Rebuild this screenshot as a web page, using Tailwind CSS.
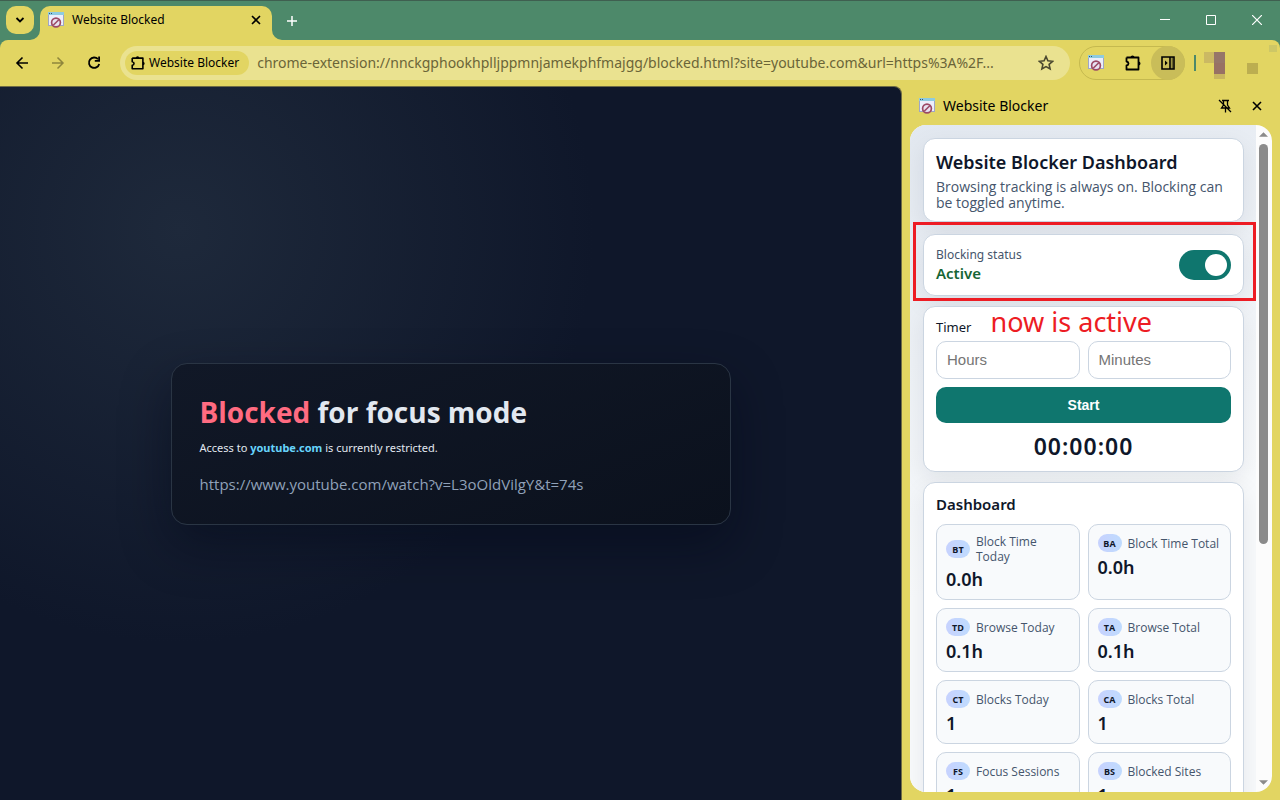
<!DOCTYPE html>
<html lang="en">
<head>
<meta charset="utf-8">
<meta name="viewport" content="width=device-width, initial-scale=1">
<title>Website Blocked</title>
<script src="https://cdn.jsdelivr.net/npm/@tailwindcss/browser@4"></script>
</head>
<body class="relative flex h-screen flex-col overflow-hidden bg-[#e2d562] font-['Noto_Sans','Open_Sans',sans-serif] text-black">
<svg class="hidden" aria-hidden="true">
  <symbol id="app" viewBox="0 0 16 16">
    <path d="M0 0h16v14H0z" fill="#9fa6c6"/><path d="M1 3h14v10H1z" fill="#eceefa"/><path d="M0 0h16v3H0z" fill="#8ecbe0"/><path d="M1 1h1v1H1zM3 1h1v1H3z" fill="#34546e"/>
    <circle cx="8" cy="10.500" r="4.400" fill="#e8e3f2" stroke="#9c4a66" stroke-width="1.700"/><path d="m5.200 13.300 5.600-5.600" stroke="#9c4a66" stroke-width="1.600"/>
  </symbol>
  <symbol id="puzzle" viewBox="0 0 18 18">
    <path d="M2.500 3.500h12v4.700M14.500 11v4.500h-12v-4c1.200-.2 2-.9 2-2s-.8-1.800-2-2v-4M14.500 7v5" fill="none" stroke="currentColor" stroke-width="1.800" stroke-linejoin="round"/><path d="M6.500 3.500a2 2 0 0 1 4 0zM14.500 7.500a2 2 0 0 1 0 4z" fill="currentColor"/>
  </symbol>
  <symbol id="x" viewBox="0 0 10 10"><path d="m1 1 8 8M9 1 1 9" fill="none" stroke="currentColor" stroke-width="1.600"/></symbol>
</svg>

<header class="flex h-10 shrink-0 border-t border-[#3f5f50] bg-[#4d896a]">
  <button aria-label="Search tabs" class="mt-[5px] ml-1.5 flex size-7 items-center justify-center rounded-[10px] bg-[#e2d562]">
    <svg class="size-2.5" viewBox="0 0 10 10"><path d="m1.500 3 3.500 3.500L8.500 3" fill="none" stroke="currentColor" stroke-width="1.800"/></svg>
  </button>
  <div class="relative mt-[5px] ml-1.5 flex w-[232px] items-center rounded-t-[10px] bg-[#e2d562] pb-1.5 pl-2 pr-[11px]">
    <svg class="absolute bottom-0 -left-2.5 size-2.5" viewBox="0 0 10 10"><path d="M10 0v10H0A10 10 0 0 0 10 0" fill="#e2d562"/></svg>
    <svg class="absolute bottom-0 -right-2.5 size-2.5" viewBox="0 0 10 10"><path d="M0 0v10h10A10 10 0 0 1 0 0" fill="#e2d562"/></svg>
    <svg class="size-4"><use href="#app"/></svg>
    <span class="ml-2 flex-1 text-[12px]">Website Blocked</span>
    <button aria-label="Close tab"><svg class="size-2.5"><use href="#x"/></svg></button>
  </div>
  <button aria-label="New tab" class="ml-[15px] text-white"><svg class="size-2.5" viewBox="0 0 10 10"><path d="M5 0v10M0 5h10" stroke="currentColor" stroke-width="1.500"/></svg></button>
  <div class="ml-auto flex items-center gap-9 pr-[18px] pb-0.5 text-white">
    <button aria-label="Minimize"><svg class="size-2.5" viewBox="0 0 10 10"><path d="M0 4.500h10" stroke="currentColor"/></svg></button>
    <button aria-label="Maximize"><svg class="size-2.5" viewBox="0 0 10 10"><path d="M.5.5h9v9h-9z" fill="none" stroke="currentColor"/></svg></button>
    <button aria-label="Close"><svg class="size-2.5" viewBox="0 0 10 10"><path d="m0 0 10 10M10 0 0 10" stroke="currentColor" stroke-width="1.200"/></svg></button>
  </div>
</header>

<div class="bg-[#4d896a]">
<nav class="flex h-[46px] items-center rounded-t-lg bg-[#e2d562] pr-[21px] pl-[15px]">
  <div class="flex gap-[22px]">
    <button aria-label="Back"><svg class="size-3.5" viewBox="0 0 14 14"><path d="M7.500 1.500 2 7l5.500 5.500M2 7h11" fill="none" stroke="currentColor" stroke-width="1.600"/></svg></button>
    <button aria-label="Forward" class="text-[#8f863c]"><svg class="size-3.5" viewBox="0 0 14 14"><path d="M6.500 1.500 12 7l-5.500 5.500M12 7H1" fill="none" stroke="currentColor" stroke-width="1.500"/></svg></button>
    <button aria-label="Reload"><svg class="size-3.5" viewBox="0 0 14 14"><path d="M11 3.200A5.200 5.200 0 1 0 12.200 8" fill="none" stroke="currentColor" stroke-width="1.800"/><path d="M13 .5v5.300H7.800V4h3.400V.5z" fill="currentColor"/></svg></button>
  </div>
  <div class="ml-[19px] flex h-[34px] min-w-0 flex-1 items-center rounded-full bg-[#eae290] pr-4 pl-[5px]">
    <button class="flex h-6 shrink-0 items-center gap-[3px] rounded-full bg-[#e2d562] pr-2.5 pl-[5px] text-[12px]"><svg class="size-4"><use href="#puzzle"/></svg>Website Blocker</button>
    <input aria-label="Address" class="ml-2 min-w-0 flex-1 bg-transparent pb-0.5 text-[14px] text-[#6a6538] outline-none" value="chrome-extension://nnckgphookhplljppmnjamekphfmajgg/blocked.html?site=youtube.com&amp;url=https%3A%2F...">
    <button aria-label="Bookmark"><svg class="size-4" viewBox="0 0 16 16"><path d="m8 1.500 1.900 4.300 4.700.5-3.500 3.100 1 4.600L8 11.600 3.900 14l1-4.600L1.400 6.300l4.700-.5z" fill="none" stroke="#4b482f" stroke-width="1.600"/></svg></button>
  </div>
  <div class="ml-[9px] flex h-[34px] w-[106px] shrink-0 items-center rounded-full border border-[#c5b94f] pl-2">
    <button aria-label="Website Blocker"><svg class="size-4"><use href="#app"/></svg></button>
    <button aria-label="Extensions" class="ml-5"><svg class="size-[18px]"><use href="#puzzle"/></svg></button>
    <button aria-label="Side panel" class="-mr-px ml-auto flex size-[34px] items-center justify-center rounded-full bg-[#c9bd59]"><svg class="size-3.5" viewBox="0 0 14 14"><path d="M1 1h12v12H1zM9 1v12" fill="none" stroke="currentColor" stroke-width="1.600"/><path d="M11.200 1v12" stroke="currentColor" stroke-width=".7"/><path d="M4 4.500v5L6.700 7z"/></svg></button>
  </div>
  <div class="ml-[9px] h-4 w-0.5 bg-[#4d896a]"></div>
  <svg class="-mr-5 ml-2 h-[46px] w-[75px]" viewBox="0 0 75 46" shape-rendering="crispEdges" aria-label="Profile"><path d="M0 12h10v11H0z" fill="#cbb963"/><path d="M10 12h11v11H10z" fill="#967669"/><path d="M10 23h11v11H10z" fill="#987164"/><path d="M10 34h11v5H10z" fill="#c9b65f"/><path d="M43 23h11v11H43z" fill="#bcae50"/><path d="M65 5h8v7h-8z" fill="#cdc766"/></svg>
</nav>
</div>

<div class="flex min-h-0 flex-1">
  <main class="flex min-w-0 flex-1 items-center justify-center rounded-tr-lg border-t border-r border-[#6f6c45] bg-[#0f172a] bg-[radial-gradient(circle_at_20%_20%,#1e293b_0%,#0f172a_45%)]">
    <section class="w-[560px] rounded-2xl border border-[#2a3544] bg-[linear-gradient(160deg,#111827,#0b111d)] px-7 py-7 shadow-[0_20px_50px_rgba(2,6,23,0.45)]">
      <h1 class="font-['Open_Sans',sans-serif] text-[28px] leading-[41px] font-bold text-slate-200"><span class="text-[#ff6b81]">Blocked</span> for focus mode</h1>
      <p class="mt-[5px] text-[11px] leading-5 text-slate-200">Access to <strong class="text-[#67d4fc]">youtube.com</strong> is currently restricted.</p>
      <p class="mt-3.5 font-['Open_Sans',sans-serif] text-[15px] leading-6 text-slate-400">https://www.youtube.com/watch?v=L3oOldVilgY&amp;t=74s</p>
    </section>
  </main>

  <aside class="flex w-[378px] shrink-0 flex-col pr-2 pb-2 pl-2">
    <div class="flex h-[39px] shrink-0 items-center pr-2.5 pl-[9px]">
      <svg class="size-4"><use href="#app"/></svg>
      <span class="ml-2 flex-1 text-[14px]">Website Blocker</span>
      <button aria-label="Unpin" class="mr-5"><svg class="size-3.5" viewBox="0 0 14 14"><path d="M4 1.500h7M5.500 2v4L3.500 9h8l-2-3V2M7.500 9v4.500M1 1l12 12" fill="none" stroke="currentColor" stroke-width="1.300"/></svg></button>
      <button aria-label="Close side panel"><svg class="size-2.5"><use href="#x"/></svg></button>
    </div>
    <div class="flex min-h-0 flex-1 overflow-hidden rounded-[16px] bg-[#fcfcfc]">
      <div class="min-w-0 flex-1 overflow-hidden bg-[linear-gradient(160deg,#e2e8f0,#f8fafc_60%)] py-[13px] pr-3 pl-[13px] text-[#0f172a]">
        <section class="rounded-xl border border-[#cbd5e1] bg-white px-3 pt-2.5 pb-2.5 shadow-[0_8px_24px_rgba(15,23,42,0.08)]">
          <h2 class="text-[18px] leading-[26px] font-semibold">Website Blocker Dashboard</h2>
          <p class="mt-1 font-['Open_Sans',sans-serif] text-[14px] leading-4 text-slate-600">Browsing tracking is always on. Blocking can be toggled anytime.</p>
        </section>
        <section class="mt-3 flex h-[62px] items-center justify-between rounded-xl border border-[#cbd5e1] bg-white px-3 shadow-[0_8px_24px_rgba(15,23,42,0.08)]">
          <label for="blocking" class="pb-0.5"><span class="block text-[12px] leading-[18px] text-slate-600">Blocking status</span><span class="block text-[15px] leading-[18px] font-semibold text-[#166534]">Active</span></label>
          <input id="blocking" type="checkbox" role="switch" checked class="flex h-[30px] w-[52px] appearance-none items-center justify-end rounded-full bg-[#0f766e] px-1 before:size-[22px] before:rounded-full before:bg-white">
        </section>
        <section class="mt-2.5 rounded-xl border border-[#cbd5e1] bg-white px-3 pt-2.5 pb-2.5 shadow-[0_8px_24px_rgba(15,23,42,0.08)]">
          <h3 class="text-[13px] leading-5">Timer</h3>
          <div class="mt-1 grid grid-cols-2 gap-2 font-['Liberation_Sans',Arial,sans-serif]">
            <input aria-label="Hours" placeholder="Hours" class="h-[38px] min-w-0 rounded-[10px] border border-[#cbd5e1] px-2.5 pb-0.5 text-[15px] placeholder:text-[#757575]">
            <input aria-label="Minutes" placeholder="Minutes" class="h-[38px] min-w-0 rounded-[10px] border border-[#cbd5e1] px-2.5 pb-0.5 text-[15px] placeholder:text-[#757575]">
            <button class="col-span-2 h-9 rounded-[10px] bg-[#0f766e] text-[14px] font-bold text-white">Start</button>
          </div>
          <div class="mt-2 text-center text-[23px] leading-[30px] font-semibold tracking-[1px]">00:00:00</div>
        </section>
        <section class="mt-2.5 rounded-xl border border-[#cbd5e1] bg-white px-3 pt-[11px] pb-3 shadow-[0_8px_24px_rgba(15,23,42,0.08)]">
          <h3 class="text-[15px] leading-5 font-semibold">Dashboard</h3>
          <dl id="stats" class="mt-2.5 grid grid-cols-2 gap-2"></dl>
        </section>
      </div>
      <div class="flex w-4 shrink-0 flex-col items-center py-[7px] pr-px" aria-hidden="true">
        <svg class="h-[5px] w-[9px]" viewBox="0 0 10 5"><path d="M0 5 5 0l5 5z" fill="#8b8b8b"/></svg>
        <div class="mt-[7px] h-[400px] w-[9px] rounded-full bg-[#8b8b8b]"></div>
        <svg class="mt-auto h-[5px] w-[9px]" viewBox="0 0 10 5"><path d="m0 0 5 5 5-5z" fill="#8b8b8b"/></svg>
      </div>
    </div>
  </aside>
</div>

<div class="pointer-events-none absolute top-[222px] right-6 h-[79px] w-[343px] border-3 border-[#ed1c24]"></div>
<p class="pointer-events-none absolute top-[304px] right-32 text-[27px] leading-9 text-[#ed1c24]">now is active</p>

<script>
const stats = [["BT","Block Time Today","0.0h"],["BA","Block Time Total","0.0h"],["TD","Browse Today","0.1h"],["TA","Browse Total","0.1h"],["CT","Blocks Today","1"],["CA","Blocks Total","1"],["FS","Focus Sessions","1"],["BS","Blocked Sites","1"]];
document.getElementById("stats").innerHTML = stats.map(([code, label, value]) => `
  <div class="min-w-0 rounded-[10px] border border-[#cbd5e1] bg-slate-50 px-[9px] pt-[9px] pb-2">
    <dt class="flex items-center gap-1.5 font-['Open_Sans',sans-serif] text-[12px] leading-[15px] text-slate-600"><span class="flex h-[18px] w-6 shrink-0 items-center justify-center rounded-full bg-linear-to-r from-[#c7d2fe] to-[#bfdbfe] text-[9px] font-bold text-[#0f172a]">${code}</span>${label}</dt>
    <dd class="mt-[3px] text-[18px] leading-6 font-semibold">${value}</dd>
  </div>`).join("");
</script>
</body>
</html>
